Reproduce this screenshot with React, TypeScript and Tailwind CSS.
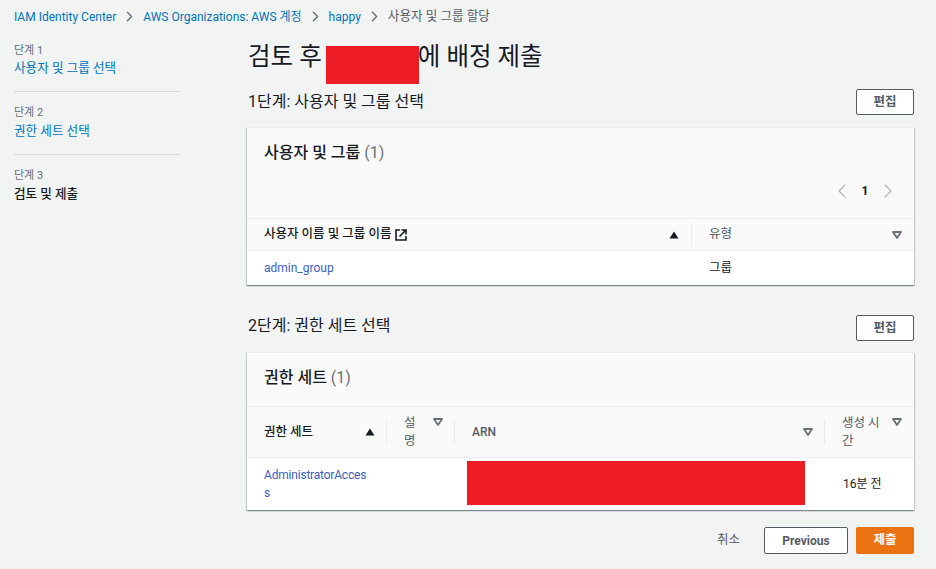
import { ChevronLeft, ChevronRight } from 'lucide-react';

const FONT = "font-['Roboto','Noto_Sans_CJK_KR',sans-serif]";
const CARD = 'bg-white border-t border-[#eaeded] shadow-[0_1px_1px_0_rgba(0,28,36,0.3),1px_1px_1px_0_rgba(0,28,36,0.15),-1px_1px_1px_0_rgba(0,28,36,0.15)]';

function SortUp() {
  return (
    <svg width="10" height="8" viewBox="0 0 10 8" className="shrink-0">
      <path d="M5 0.5 L9.5 7.5 L0.5 7.5 Z" fill="#16191f" />
    </svg>
  );
}

function SortNone() {
  return (
    <svg width="10" height="8" viewBox="0 0 10 8" className="shrink-0">
      <path d="M1 1 L9 1 L5 7 Z" fill="none" stroke="#687078" strokeWidth="1.8" strokeLinejoin="round" />
    </svg>
  );
}

function ExternalIcon() {
  return (
    <svg width="12" height="12" viewBox="0 0 12 12" fill="none" stroke="#16191f" strokeWidth="1.6" className="shrink-0">
      <path d="M5 1H1V11H11V7" />
      <path d="M4.5 7.5L10.5 1.5M6.5 1H11V5.5" />
    </svg>
  );
}

function EditButton() {
  return (
    <button className="w-[58px] h-[26px] bg-white border border-[#545b64] rounded-[2px] text-[12.5px] font-bold text-[#545b64]">
      편집
    </button>
  );
}

function Step({ label, title, active, line, first }: { label: string; title: string; active?: boolean; line?: boolean; first?: boolean }) {
  return (
    <div className={`${first ? '' : 'pt-[13px]'} ${line ? 'pb-[14px] border-b border-[#d5dbdb]' : ''}`}>
      <div className="text-[11px] leading-[16px] text-[#687078]">{label}</div>
      <div className={`${first ? 'mt-0' : 'mt-[1px]'} text-[12.6px] leading-[18px] ${active ? 'font-medium text-[#16191f]' : 'text-[#0073bb]'}`}>
        {title}
      </div>
    </div>
  );
}

function Crumb({ children }: { children: string }) {
  return <span className="text-[#0073bb]">{children}</span>;
}

function Sep() {
  return <ChevronRight size={17} strokeWidth={2} className="mx-[5px] text-[#687078]" />;
}

function Divider() {
  return <div className="w-px h-[24px] bg-[#eaeded] shrink-0" />;
}

export default function App() {
  return (
    <div className={`${FONT} w-[936px] h-[569px] overflow-hidden bg-[#f2f3f3] text-[#16191f]`}>
      <nav className="h-[33px] pl-[14px] flex items-center text-[12px]">
        <Crumb>IAM Identity Center</Crumb>
        <Sep />
        <Crumb>AWS Organizations: AWS 계정</Crumb>
        <Sep />
        <Crumb>happy</Crumb>
        <Sep />
        <span className="text-[12.6px] text-[#545b64]">사용자 및 그룹 할당</span>
      </nav>

      <div className="flex">
        <aside className="w-[166px] ml-[14px] pt-[10px] shrink-0">
          <Step label="단계 1" title="사용자 및 그룹 선택" line first />
          <Step label="단계 2" title="권한 세트 선택" line />
          <Step label="단계 3" title="검토 및 제출" active />
        </aside>

        <main className="w-[667px] ml-[67px]">
          <div className="relative h-[56px] pt-[7px]">
            <h1 className="text-[24.5px] leading-[34px] font-normal pl-[1px]">
              검토 후 <span className="inline-block w-[90px]" />에 배정 제출
            </h1>
            <div className="absolute left-[79px] top-[13px] w-[93px] h-[38px] bg-[#ee1c25]" />
          </div>

          <div className="h-[38px] flex items-start justify-between">
            <h2 className="text-[16px] leading-[26px] font-normal pl-[1px]">1단계: 사용자 및 그룹 선택</h2>
            <EditButton />
          </div>

          <section className={CARD}>
            <div className="h-[90px] bg-[#fafafa] px-[17px] relative">
              <h3 className="pt-[15px] text-[16px] leading-[20px] font-medium">
                사용자 및 그룹 <span className="font-normal text-[#687078]">(1)</span>
              </h3>
              <div className="absolute right-[14px] top-[51px] flex items-center gap-[7px] text-[12px] font-bold text-[#16191f]">
                <ChevronLeft size={24} strokeWidth={1.2} className="text-[#aab7b8]" />
                <span className="w-[8px] text-center">1</span>
                <ChevronRight size={24} strokeWidth={1.2} className="text-[#aab7b8]" />
              </div>
            </div>
            <div className="h-[33px] flex items-center bg-[#fafafa] border-y border-[#eaeded] text-[12.5px]">
              <div className="w-[444px] pl-[17px] pr-[12px] flex items-center font-medium">
                <span className="mr-[4px]">사용자 이름 및 그룹 이름</span>
                <ExternalIcon />
                <span className="flex-1" />
                <SortUp />
              </div>
              <Divider />
              <div className="flex-1 pl-[17px] pr-[12px] flex items-center justify-between text-[#545b64]">
                <span>유형</span>
                <SortNone />
              </div>
            </div>
            <div className="h-[34px] flex items-center text-[12px]">
              <div className="w-[445px] pl-[17px] text-[#3b5fc0]">admin_group</div>
              <div className="pl-[17px] text-[12.5px]">그룹</div>
            </div>
          </section>

          <div className="h-[37px] mt-[30px] flex items-start justify-between">
            <h2 className="text-[16px] leading-[22px] font-normal pl-[1px]">2단계: 권한 세트 선택</h2>
            <EditButton />
          </div>

          <section className={CARD}>
            <div className="h-[53px] bg-[#fafafa] px-[17px]">
              <h3 className="pt-[15px] text-[16px] leading-[20px] font-medium">
                권한 세트 <span className="font-normal text-[#687078]">(1)</span>
              </h3>
            </div>
            <div className="h-[52px] flex items-center bg-[#fafafa] border-y border-[#eaeded] text-[12.5px] leading-[18px]">
              <div className="w-[139px] pl-[17px] pr-[11px] flex items-center justify-between font-medium">
                <span>권한 세트</span>
                <SortUp />
              </div>
              <Divider />
              <div className="w-[67px] pl-[17px] pr-[11px] flex items-start justify-between text-[#545b64]">
                <span className="w-[14px]">설명</span>
                <span className="mt-[4px]"><SortNone /></span>
              </div>
              <Divider />
              <div className="w-[369px] pl-[17px] pr-[11px] flex items-center justify-between font-medium text-[#545b64]">
                <span className="text-[12px]">ARN</span>
                <SortNone />
              </div>
              <Divider />
              <div className="flex-1 pl-[17px] pr-[12px] flex items-start justify-between text-[#545b64]">
                <span className="w-[42px]">생성 시간</span>
                <span className="mt-[4px]"><SortNone /></span>
              </div>
            </div>
            <div className="h-[52px] flex text-[12px] relative">
              <div className="w-[596px] pl-[17px] pt-[8px] leading-[18px] tracking-[-0.2px] text-[#3b5fc0]">
                AdministratorAcces
                <br />s
              </div>
              <div className="flex items-center">16분 전</div>
              <div className="absolute left-[220px] top-[3px] w-[338px] h-[44px] bg-[#ee1c25]" />
            </div>
          </section>

          <div className="mt-[17px] flex items-center justify-end text-[12px]">
            <span className="mr-[24px] text-[12.5px] text-[#545b64]">취소</span>
            <button className="w-[84px] h-[27px] mr-[8px] bg-white border border-[#545b64] rounded-[2px] font-bold text-[#545b64]">
              Previous
            </button>
            <button className="w-[58px] h-[27px] bg-[#ec7211] rounded-[2px] text-[12.5px] font-bold text-white">제출</button>
          </div>
        </main>
      </div>
    </div>
  );
}
